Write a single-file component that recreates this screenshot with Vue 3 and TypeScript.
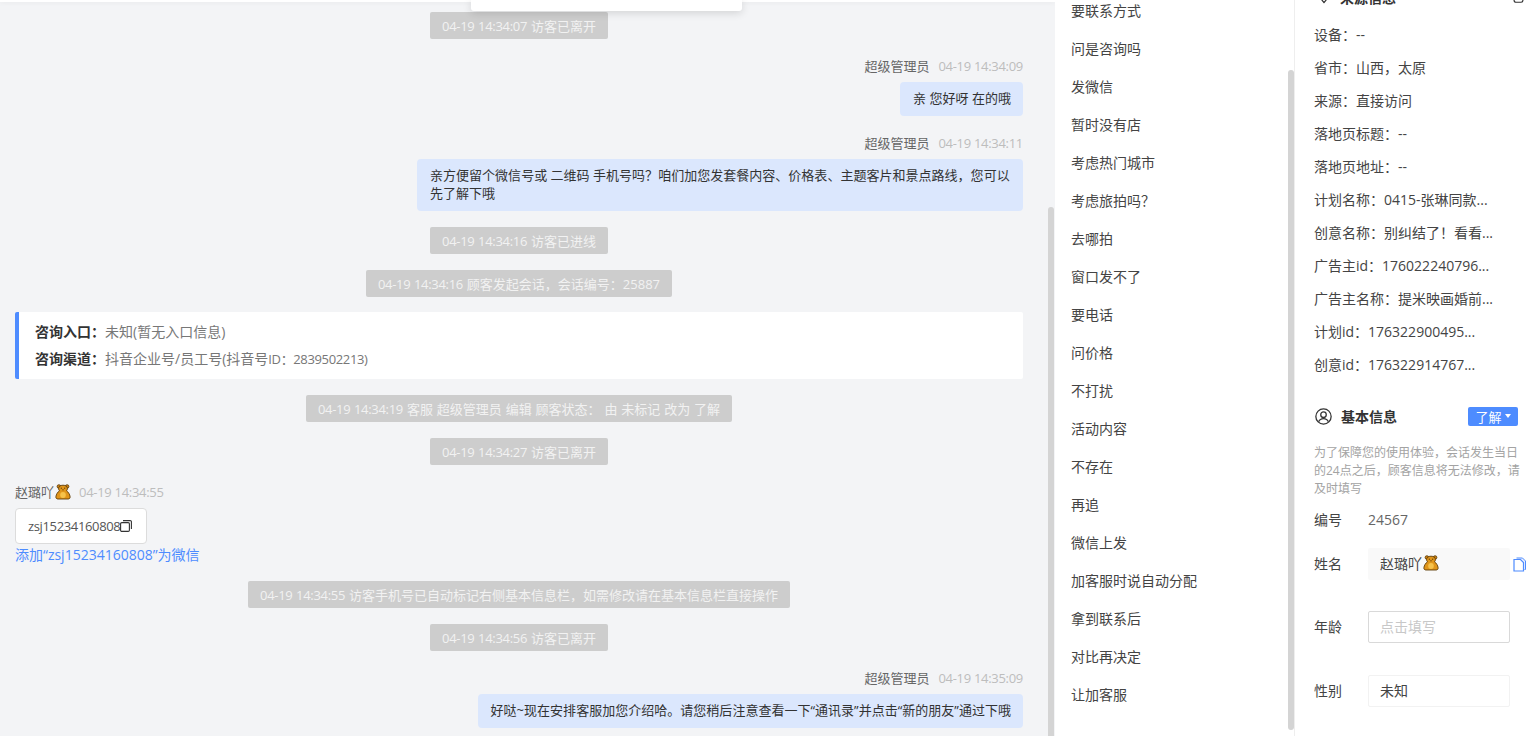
<script setup lang="ts">
type ChatItem =
  | { id: number; kind: 'sys'; time: string; text: string }
  | { id: number; kind: 'agent'; time: string; text: string }
  | { id: number; kind: 'source' }
  | { id: number; kind: 'visitor' }

const chat: ChatItem[] = [
  { id: 1, kind: 'sys', time: '04-19 14:34:07', text: '访客已离开' },
  { id: 2, kind: 'agent', time: '04-19 14:34:09', text: '亲 您好呀 在的哦' },
  { id: 3, kind: 'agent', time: '04-19 14:34:11', text: '亲方便留个微信号或 二维码 手机号吗？咱们加您发套餐内容、价格表、主题客片和景点路线，您可以先了解下哦' },
  { id: 4, kind: 'sys', time: '04-19 14:34:16', text: '访客已进线' },
  { id: 5, kind: 'sys', time: '04-19 14:34:16', text: '顾客发起会话，会话编号：25887' },
  { id: 6, kind: 'source' },
  { id: 7, kind: 'sys', time: '04-19 14:34:19', text: '客服 超级管理员 编辑 顾客状态： 由 未标记 改为 了解' },
  { id: 8, kind: 'sys', time: '04-19 14:34:27', text: '访客已离开' },
  { id: 9, kind: 'visitor' },
  { id: 10, kind: 'sys', time: '04-19 14:34:55', text: '访客手机号已自动标记右侧基本信息栏，如需修改请在基本信息栏直接操作' },
  { id: 11, kind: 'sys', time: '04-19 14:34:56', text: '访客已离开' },
  { id: 12, kind: 'agent', time: '04-19 14:35:09', text: '好哒~现在安排客服加您介绍哈。请您稍后注意查看一下“通讯录”并点击“新的朋友”通过下哦' },
]

const quick: string[] = [
  '要联系方式', '问是咨询吗', '发微信', '暂时没有店', '考虑热门城市', '考虑旅拍吗？', '去哪拍', '窗口发不了', '要电话', '问价格',
  '不打扰', '活动内容', '不存在', '再追', '微信上发', '加客服时说自动分配', '拿到联系后', '对比再决定', '让加客服',
]

const source: string[] = [
  '设备：--', '省市：山西，太原', '来源：直接访问', '落地页标题：--', '落地页地址：--', '计划名称：0415-张琳同款...',
  '创意名称：别纠结了！看看...', '广告主id：176022240796...', '广告主名称：提米映画婚前...', '计划id：176322900495...', '创意id：176322914767...',
]
</script>

<template>
  <div class="page">
    <main class="chat">
      <div class="topbar"></div>
      <div class="popup"></div>
      <div class="stream">
        <template v-for="m in chat" :key="m.id">
          <div v-if="m.kind === 'sys'" class="sys"><span class="stamp">{{ m.time }}</span> {{ m.text }}</div>
          <div v-else-if="m.kind === 'agent'" class="msg msg-right">
            <div class="meta"><span class="who">超级管理员</span><span class="time stamp">{{ m.time }}</span></div>
            <div class="bubble">{{ m.text }}</div>
          </div>
          <div v-else-if="m.kind === 'source'" class="source">
            <div><b>咨询入口：</b><span>未知(暂无入口信息)</span></div>
            <div><b>咨询渠道：</b><span>抖音企业号/员工号(抖音号<small>ID：2839502213)</small></span></div>
          </div>
          <div v-else class="msg">
            <div class="meta">
              <span class="who who-v">赵璐吖</span>
              <svg class="bear" viewBox="0 0 16 16" aria-hidden="true">
                <circle cx="3.900" cy="2.500" r="1.800" fill="#c97f12" stroke="#5c3a06" stroke-width=".8"/>
                <circle cx="12.100" cy="2.500" r="1.800" fill="#c97f12" stroke="#5c3a06" stroke-width=".8"/>
                <path d="M8 1.200c2.800 0 4.400 1.500 4.400 3.500 0 .9-.4 1.600-.9 2.100 1.800 1.200 3.300 3.500 3.600 5.900.2 1.500-.8 2.300-2 2.300H2.900c-1.200 0-2.200-.8-2-2.300.3-2.400 1.800-4.700 3.600-5.900-.5-.5-.9-1.200-.9-2.100 0-2 1.600-3.500 4.400-3.500z" fill="#e0951a" stroke="#5c3a06" stroke-width=".9"/>
                <ellipse cx="8" cy="11" rx="2.800" ry="3" fill="#f6c24a"/>
                <path d="M5.800 4.200h1M9.200 4.200h1M7.500 5.800h1" stroke="#3d2604" stroke-width="1"/>
              </svg>
              <span class="time stamp">04-19 14:34:55</span>
            </div>
            <div class="wx-card">
              <span class="wx-id">zsj15234160808</span>
              <svg class="copy" viewBox="0 0 12 12" aria-hidden="true">
                <rect x=".6" y="2.600" width="8.800" height="8.800" rx="1.200" fill="none" stroke="#333" stroke-width="1.100"/>
                <path d="M3 .6h7.200a1.200 1.200 0 0 1 1.200 1.200V9" fill="none" stroke="#333" stroke-width="1.100"/>
              </svg>
            </div>
            <div class="wx-link">添加“zsj15234160808”为微信</div>
          </div>
        </template>
      </div>
      <div class="bar bar-chat"></div>
    </main>

    <aside class="quick">
      <div class="quick-list">
        <div v-for="q in quick" :key="q" class="quick-item">{{ q }}</div>
      </div>
      <div class="bar bar-quick"></div>
    </aside>

    <aside class="info">
      <div class="head head-source">
        <div class="head-title">
          <svg class="ic-diamond" viewBox="0 0 16 16" aria-hidden="true">
            <path d="M3 1.500h10l2 4-7 9-7-9z" fill="none" stroke="#333" stroke-width="1.400" stroke-linejoin="round"/>
          </svg>
          <b>来源信息</b>
        </div>
        <svg class="ic-clip" viewBox="0 0 12 16" aria-hidden="true">
          <rect x="1" y="1" width="10" height="13" rx="2" fill="none" stroke="#333" stroke-width="1.400"/>
        </svg>
      </div>
      <div v-for="r in source" :key="r" class="src-row">{{ r }}</div>

      <div class="head head-basic">
        <div class="head-title">
          <svg class="ic-user" viewBox="0 0 16 16" aria-hidden="true">
            <circle cx="8" cy="8" r="7.200" fill="none" stroke="#333" stroke-width="1.200"/>
            <circle cx="8" cy="6.300" r="2.600" fill="none" stroke="#333" stroke-width="1.200"/>
            <path d="M3.400 13c.8-2 2.500-3 4.600-3s3.800 1 4.600 3" fill="none" stroke="#333" stroke-width="1.200"/>
          </svg>
          <b>基本信息</b>
        </div>
        <div class="tag">了解<i class="caret"></i></div>
      </div>
      <p class="desc">为了保障您的使用体验，会话发生当日的24点之后，顾客信息将无法修改，请及时填写</p>

      <div class="form-row row-id"><label>编号</label><span class="id-val">24567</span></div>
      <div class="form-row row-name">
        <label>姓名</label>
        <div class="field field-name">
          赵璐吖
          <svg class="bear" viewBox="0 0 16 16" aria-hidden="true">
            <circle cx="3.900" cy="2.500" r="1.800" fill="#c97f12" stroke="#5c3a06" stroke-width=".8"/>
            <circle cx="12.100" cy="2.500" r="1.800" fill="#c97f12" stroke="#5c3a06" stroke-width=".8"/>
            <path d="M8 1.200c2.800 0 4.400 1.500 4.400 3.500 0 .9-.4 1.600-.9 2.100 1.800 1.200 3.300 3.500 3.600 5.900.2 1.500-.8 2.300-2 2.300H2.900c-1.200 0-2.200-.8-2-2.300.3-2.400 1.800-4.700 3.600-5.900-.5-.5-.9-1.200-.9-2.100 0-2 1.600-3.500 4.400-3.500z" fill="#e0951a" stroke="#5c3a06" stroke-width=".9"/>
            <ellipse cx="8" cy="11" rx="2.800" ry="3" fill="#f6c24a"/>
            <path d="M5.800 4.200h1M9.200 4.200h1M7.500 5.800h1" stroke="#3d2604" stroke-width="1"/>
          </svg>
        </div>
        <svg class="ic-copy" viewBox="0 0 13 15" aria-hidden="true">
          <path d="M3.500 1h6l3 3v8.500h-1" fill="#eef3ff" stroke="#4e8cff" stroke-width="1"/>
          <path d="M1 2.500h6.500l3 3V14H1z" fill="#fff" stroke="#4e8cff" stroke-width="1.200"/>
        </svg>
      </div>
      <div class="form-row row-age">
        <label>年龄</label>
        <div class="field field-age">点击填写</div>
      </div>
      <div class="form-row row-sex">
        <label>性别</label>
        <div class="field field-sex">未知</div>
      </div>
    </aside>
  </div>
</template>

<style scoped>
.page {
  display: flex;
  width: 1538px;
  height: 736px;
  overflow: hidden;
  background: #fff;
  color: #333;
  font-family: "Open Sans", "Noto Sans CJK SC", "Liberation Sans", sans-serif;
  font-size: 13px;
}
.chat {
  position: relative;
  flex: 0 0 1055px;
  background: #f3f4f6;
  overflow: hidden;
}
.topbar {
  height: 2px;
  background: #fff;
  box-shadow: 0 1px 4px rgba(0, 0, 0, 0.06);
}
.popup {
  position: absolute;
  left: 471px;
  top: 0;
  width: 271px;
  height: 11px;
  background: #fff;
  border-radius: 0 0 3px 3px;
  box-shadow: 0 2px 8px rgba(0, 0, 0, 0.14);
}
.stream {
  display: flex;
  flex-direction: column;
  gap: 16px;
  padding: 10px 32px 0 15px;
}
.stamp {
  letter-spacing: -0.3px;
}
.sys {
  align-self: center;
  height: 27px;
  padding: 0 12px;
  line-height: 29px;
  border-radius: 2px;
  background: #cdcdcd;
  color: #f2f2f2;
  white-space: nowrap;
  word-spacing: 0.5px;
}
.msg {
  display: flex;
  flex-direction: column;
  align-items: flex-start;
}
.msg-right {
  align-items: flex-end;
}
.meta {
  display: flex;
  align-items: center;
  height: 22px;
  margin-bottom: 5px;
  line-height: 22px;
}
.who {
  color: #666;
  margin-right: 9px;
}
.who-v {
  margin-right: 0;
}
.time {
  color: #bdbdbd;
}
.bear {
  flex: none;
  width: 16px;
  height: 16px;
  margin: 0 8px 0 1px;
}
.bubble {
  box-sizing: border-box;
  max-width: 606px;
  padding: 7px 12px 9px 13px;
  line-height: 18px;
  border-radius: 4px;
  background: #dbe7fd;
  color: #333;
  letter-spacing: 0.02px;
}
.source {
  display: flex;
  flex-direction: column;
  justify-content: center;
  height: 67px;
  margin-top: -1px;
  padding-left: 16px;
  line-height: 27px;
  font-size: 14px;
  background: #fff;
  border-left: 4px solid #4e8cff;
  border-radius: 2px;
  color: #777;
}
.source b {
  color: #333;
  font-weight: 700;
}
.source small {
  font-size: 13px;
  letter-spacing: -0.35px;
}
.wx-card {
  display: flex;
  align-items: center;
  box-sizing: border-box;
  width: 132px;
  height: 36px;
  padding-left: 12px;
  background: #fff;
  border: 1px solid #dcdcdc;
  border-radius: 4px;
  color: #555;
  white-space: nowrap;
}
.wx-id {
  letter-spacing: -0.35px;
}
.copy {
  width: 12px;
  height: 12px;
  flex: none;
}
.wx-link {
  height: 21px;
  line-height: 22px;
  font-size: 14px;
  color: #4e8cff;
  white-space: nowrap;
}
.bar {
  position: absolute;
  width: 6px;
  background: #d4d4d4;
  border-radius: 3px;
}
.bar-chat {
  left: 1048px;
  top: 207px;
  height: 532px;
}
.quick {
  position: relative;
  flex: 0 0 240px;
  box-sizing: border-box;
  border-right: 1px solid #eee;
  overflow: hidden;
}
.quick-list {
  margin-top: -8px;
}
.quick-item {
  height: 38px;
  padding-left: 16px;
  line-height: 38px;
  font-size: 14px;
  color: #444;
}
.bar-quick {
  left: 233px;
  top: 70px;
  height: 660px;
}
.info {
  flex: 1;
  min-width: 0;
  box-sizing: border-box;
  padding: 0 20px 0 19px;
  overflow: hidden;
  font-size: 14px;
}
.head {
  display: flex;
  align-items: center;
  justify-content: space-between;
  height: 22px;
}
.head-source {
  margin-top: -14px;
  margin-bottom: 10px;
}
.head-basic {
  margin-top: 24px;
}
.head-title {
  display: flex;
  align-items: center;
  color: #333;
}
.head-title b {
  font-weight: 700;
}
.ic-diamond {
  width: 14px;
  height: 14px;
  margin: 0 9px 0 3px;
}
.ic-clip {
  width: 11px;
  height: 14px;
  margin-right: -6px;
}
.ic-user {
  width: 17px;
  height: 17px;
  margin: 0 9px 0 1px;
}
.src-row {
  height: 33px;
  line-height: 33px;
  color: #444;
  white-space: nowrap;
}
.tag {
  display: flex;
  align-items: center;
  justify-content: center;
  gap: 3px;
  width: 50px;
  height: 19px;
  background: #4e8cff;
  border-radius: 2px;
  color: #fff;
  font-size: 13px;
}
.caret {
  width: 0;
  height: 0;
  border-left: 3.500px solid transparent;
  border-right: 3.500px solid transparent;
  border-top: 4px solid #fff;
}
.desc {
  width: 206px;
  margin: 17px 0 0;
  font-size: 12px;
  line-height: 18px;
  color: #a3a3a3;
}
.form-row {
  display: flex;
  align-items: center;
  position: relative;
}
.form-row label {
  flex: 0 0 54px;
  margin-bottom: 2px;
  font-size: 14px;
  color: #444;
}
.row-id {
  height: 24px;
  margin-top: 9px;
}
.row-id label {
  margin-bottom: 0;
}
.id-val {
  color: #666;
  font-size: 14px;
}
.row-name {
  margin-top: 17px;
}
.row-age {
  margin-top: 31px;
}
.row-sex {
  margin-top: 32px;
}
.field {
  display: flex;
  flex: none;
  align-items: center;
  box-sizing: border-box;
  width: 142px;
  height: 32px;
  padding: 0 0 2px 12px;
  border-radius: 2px;
  font-size: 14px;
  color: #444;
}
.field .bear {
  margin: 0 0 0 1px;
}
.field-name {
  background: #f9f9f9;
}
.field-age {
  border: 1px solid #d9d9d9;
  padding-left: 11px;
  color: #c8c8c8;
}
.field-sex {
  border: 1px solid #f2f2f2;
  padding-left: 11px;
}
.ic-copy {
  flex: none;
  width: 13px;
  height: 15px;
  margin-left: 3px;
}
</style>

<style>
html, body {
  margin: 0;
  overflow: hidden;
}
</style>
